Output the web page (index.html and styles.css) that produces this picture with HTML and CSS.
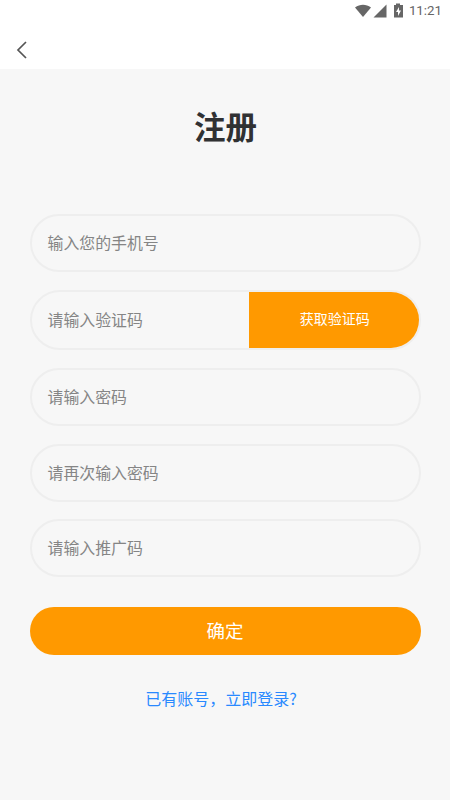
FILE: index.html
```html
<!DOCTYPE html>
<html lang="zh-CN">
<head>
<meta charset="utf-8">
<title>注册</title>
<link rel="stylesheet" href="styles.css">
</head>
<body>
<div class="status">
  <svg class="status-icons" width="52" height="22" viewBox="0 0 52 22">
    <path d="M0 7.500C5 3.700 11 3.700 16 7.500L8 17Z"/>
    <path d="M31.500 4.500V17.500H18.500Z"/>
    <path fill-rule="evenodd" d="M39 5H41V3.500H45V5H48V17.500H39ZM44 7L41 12H43V16L46 10.500H44Z"/>
  </svg>
  <span class="clock">11:21</span>
</div>
<header class="nav">
  <svg width="12" height="18" viewBox="0 0 12 18"><path d="M10 1L2 9L10 17"/></svg>
</header>
<main class="page">
  <h1 class="title">注册</h1>
  <form class="form">
    <div class="field">输入您的手机号</div>
    <div class="field field-code"><span>请输入验证码</span><button type="button" class="send">获取验证码</button></div>
    <div class="field">请输入密码</div>
    <div class="field">请再次输入密码</div>
    <div class="field field-invite">请输入推广码</div>
    <button type="button" class="submit">确定</button>
  </form>
  <a class="login">已有账号，立即登录?</a>
</main>
</body>
</html>
```
FILE: styles.css
```css
* { box-sizing: border-box; }
body { margin: 0; width: 450px; height: 800px; overflow: hidden; background: #fff; font-family: "Noto Sans CJK SC", sans-serif; }
.status { height: 22px; display: flex; justify-content: flex-end; padding-right: 8px; gap: 2px; }
.status-icons { fill: #666; }
.clock { font: 400 13.3px/22px Roboto, sans-serif; color: #666; }
.nav { height: 47px; padding: 19px 0 0 15px; }
.nav svg { display: block; margin-left: 0.5px; fill: none; stroke: #555; stroke-width: 1.7; }
.page { height: 731px; padding: 34px 29.5px 0; background: #f7f7f7; display: flex; flex-direction: column; }
.title { margin: 0 0 66px; height: 45px; padding-left: 1px; font-size: 31.5px; line-height: 45px; font-weight: 700; text-align: center; color: #303133; }
.form { display: flex; flex-direction: column; gap: 18px; }
.field { height: 58px; border: 2px solid #eee; border-radius: 29px; padding-left: 16px; font-size: 15.9px; line-height: 54px; color: #858585; }
.field-code { height: 60px; display: flex; justify-content: space-between; line-height: 56px; border-radius: 30px; }
.field-invite { margin-top: -1px; }
.send { width: 169.5px; border: 0; padding: 0 0 4px 2px; border-radius: 0 28px 28px 0; background: #ff9900; color: #fff; font: 14px "Noto Sans CJK SC", sans-serif; }
.submit { height: 48px; margin-top: 12px; padding: 0 0 3px; border: 0; border-radius: 24px; background: #ff9900; color: #fff; font: 18.5px "Noto Sans CJK SC", sans-serif; }
.login { margin-top: 31px; padding-right: 8px; font-size: 16px; line-height: 24px; color: #2989ff; text-align: center; }
```
